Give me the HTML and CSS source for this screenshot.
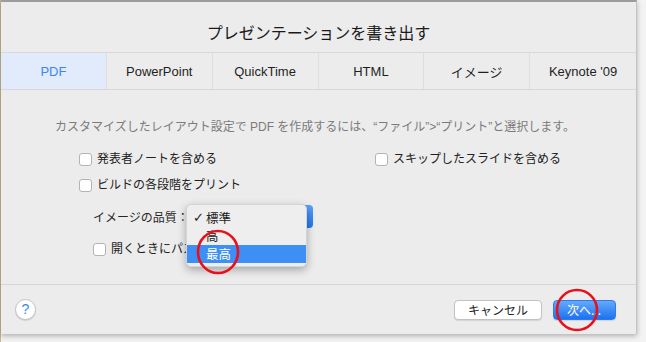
FILE: index.html
```html
<!DOCTYPE html>
<html lang="ja">
<head>
<meta charset="utf-8">
<title>プレゼンテーションを書き出す</title>
<link rel="stylesheet" href="styles.css">
</head>
<body>
<div class="screen">
  <div class="dialog">
    <div class="title">プレゼンテーションを書き出す</div>
    <div class="tabs">
      <div class="tab active">PDF</div>
      <div class="tab">PowerPoint</div>
      <div class="tab">QuickTime</div>
      <div class="tab">HTML</div>
      <div class="tab">イメージ</div>
      <div class="tab">Keynote '09</div>
    </div>
    <div class="content">
      <p class="desc">カスタマイズしたレイアウト設定で PDF を作成するには、“ファイル”&gt;“プリント”と選択します。</p>
      <div class="options">
        <label class="check"><span class="box"></span>発表者ノートを含める</label>
        <label class="check"><span class="box"></span>スキップしたスライドを含める</label>
        <label class="check"><span class="box"></span>ビルドの各段階をプリント</label>
      </div>
      <div class="quality">
        <span class="qlabel">イメージの品質：</span>
        <div class="popup">
          <span class="cap"></span>
          <div class="menu">
            <div class="item"><span class="tick">✓</span>標準</div>
            <div class="item"><span class="tick"></span>高</div>
            <div class="item selected"><span class="tick"></span>最高</div>
          </div>
        </div>
      </div>
      <label class="check pw"><span class="box"></span><span class="pwtext">開くときにパスワードを要求</span></label>
    </div>
    <div class="footer">
      <button class="help">?</button>
      <div class="actions">
        <button class="btn">キャンセル</button>
        <button class="btn primary">次へ...</button>
      </div>
    </div>
  </div>
  <svg class="mark mark-menu" width="46" height="48" viewBox="0 0 46 48"><ellipse cx="23" cy="24" rx="20" ry="21" fill="none" stroke="#e8111a" stroke-width="2.6"/></svg>
  <svg class="mark mark-next" width="46" height="46" viewBox="0 0 46 46"><ellipse cx="23" cy="23" rx="20" ry="20" fill="none" stroke="#e8111a" stroke-width="2.6"/></svg>
</div>
</body>
</html>
```
FILE: styles.css
```css
* { box-sizing: border-box; }
html, body { margin: 0; padding: 0; }
body {
  background: #ffffff;
  font-family: "Liberation Sans", "Noto Sans CJK JP", sans-serif;
  color: #262626;
}
.screen {
  position: relative;
  width: 646px;
  height: 342px;
  overflow: hidden;
  background: linear-gradient(to right, #c9b690 0, #c9b690 1px, #f3f3f3 1px);
}
.dialog {
  position: relative;
  width: 636px;
  height: 334px;
  margin-left: 1px;
  background: #ececec;
  border-top: 2px solid #9c9c9c;
  border-right: 1px solid #c4c4c4;
  box-shadow: 0 2px 5px rgba(0, 0, 0, 0.28);
  display: flex;
  flex-direction: column;
}
.title {
  height: 50px;
  padding-top: 19px;
  font-size: 16px;
  line-height: 22px;
  text-align: center;
  font-family: "Noto Sans CJK JP", sans-serif;
  color: #1a1a1a;
}
.tabs {
  display: grid;
  grid-template-columns: repeat(6, 1fr);
  height: 38px;
  border-top: 1px solid #d8d8d8;
  border-bottom: 1px solid #d8d8d8;
}
.tab {
  display: flex;
  align-items: center;
  justify-content: center;
  font-size: 13px;
  color: #1f1f1f;
  border-right: 1px solid #dedede;
}
.tab:last-child { border-right: none; }
.tab.active {
  background: #e2ebfc;
  color: #3b87f5;
}
.content {
  padding: 29px 0 0 54px;
  font-size: 12px;
}
.desc {
  margin: 0;
  font-size: 12px;
  line-height: 16px;
  color: #7b7b7b;
  white-space: nowrap;
}
.options {
  margin: 15px 0 0 24px;
  display: grid;
  grid-template-columns: 296px auto;
  row-gap: 8px;
}
.check {
  display: flex;
  align-items: center;
  gap: 5px;
  height: 18px;
  font-size: 12px;
  line-height: 18px;
  color: #222;
}
.box {
  width: 13px;
  height: 13px;
  flex: none;
  background: #fff;
  border: 1px solid #b3b3b3;
  border-radius: 3px;
}
.quality {
  margin: 10px 0 0 38px;
  display: flex;
  align-items: center;
  height: 24px;
  font-size: 12px;
}
.qlabel {
  width: 93px;
  flex: none;
  white-space: nowrap;
}
.popup {
  position: relative;
  width: 127px;
  height: 23px;
  background: #fff;
  border: 1px solid #c8c8c8;
  border-radius: 4px;
  display: flex;
  align-items: center;
  justify-content: flex-end;
}
.cap {
  width: 18px;
  height: 23px;
  margin: -1px -1px -1px 0;
  background: linear-gradient(#5aa3fb, #1f76f0);
  border-radius: 0 4px 4px 0;
  position: relative;
}
.cap::before, .cap::after {
  content: "";
  position: absolute;
  left: 6px;
  border-left: 3px solid transparent;
  border-right: 3px solid transparent;
}
.cap::before { top: 6px; border-bottom: 4px solid #fff; }
.cap::after { top: 13px; border-top: 4px solid #fff; }
.menu {
  position: absolute;
  left: -1px;
  top: -2px;
  width: 121px;
  height: 63px;
  padding: 4px 0 5px;
  background: #eeeeee;
  border-radius: 5px;
  border: 1px solid #d4d4d4;
  box-shadow: 0 3px 9px rgba(0, 0, 0, 0.3);
  z-index: 2;
}
.item {
  display: flex;
  align-items: center;
  height: 18px;
  padding-left: 6px;
  font-size: 12.5px;
  line-height: 16px;
  font-family: "Noto Sans CJK JP", sans-serif;
  color: #222;
}
.tick {
  width: 13px;
  font-size: 13px;
  font-family: "DejaVu Sans", sans-serif;
}
.item.selected {
  background: #3d8ff5;
  color: #fff;
}
.pw {
  margin: 12px 0 0 38px;
}
.pwtext {
  width: 75px;
  overflow: hidden;
  white-space: nowrap;
}
.footer {
  margin-top: auto;
  height: 50px;
  border-top: 1px solid #d6d6d6;
  display: flex;
  align-items: center;
  justify-content: space-between;
  padding: 0 20px 0 14px;
}
.help {
  width: 21px;
  height: 21px;
  padding: 0;
  border-radius: 50%;
  border: 1px solid #c3c3c3;
  background: #fff;
  color: #3a87f4;
  font-family: "Liberation Sans", sans-serif;
  font-size: 14px;
  line-height: 19px;
  box-shadow: 0 1px 1px rgba(0, 0, 0, 0.12);
}
.actions {
  display: flex;
  gap: 11px;
}
.btn {
  height: 20px;
  padding: 0;
  width: 88px;
  border: 1px solid #c2c2c2;
  border-radius: 4px;
  background: #fff;
  font-family: "Noto Sans CJK JP", sans-serif;
  font-size: 12px;
  line-height: 18px;
  color: #222;
  box-shadow: 0 1px 1px rgba(0, 0, 0, 0.1);
}
.btn.primary {
  width: 63px;
  border-color: #2a7cf0;
  background: linear-gradient(#65a9fb, #1c72f0);
  color: #fff;
  text-align: left;
  padding-left: 13px;
}
.mark {
  position: absolute;
  z-index: 5;
}
.mark-menu { left: 195px; top: 228px; }
.mark-next { left: 554px; top: 287px; }
```
